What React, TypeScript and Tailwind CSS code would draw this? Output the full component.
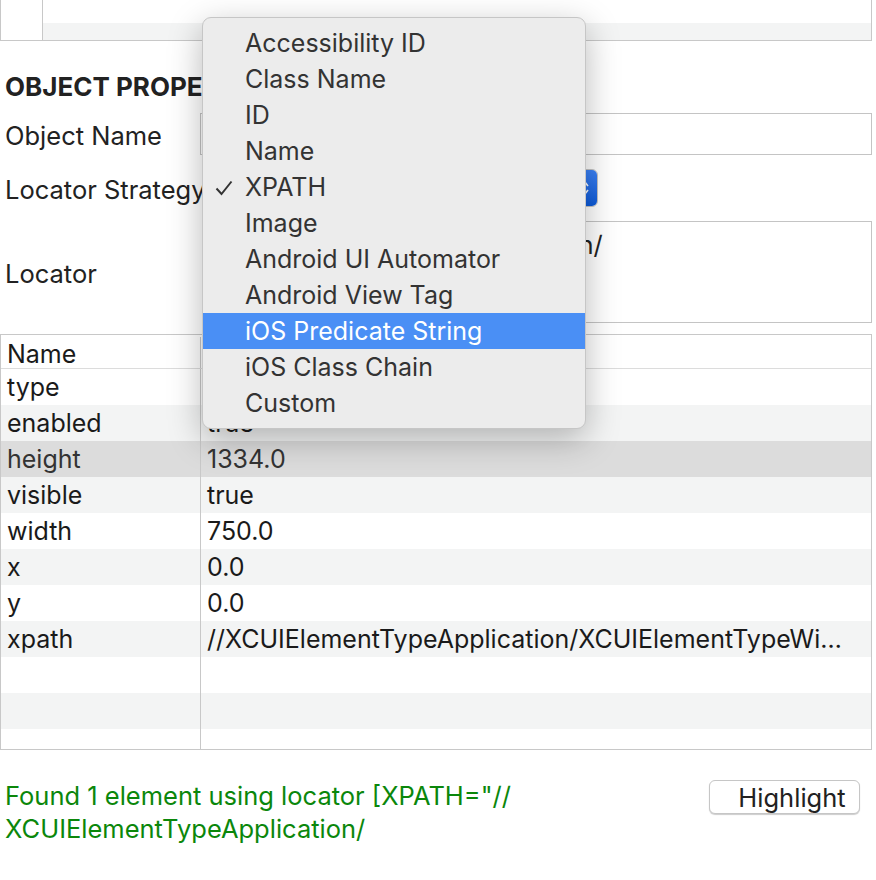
import React from "react";

const font = { fontFamily: 'Inter, "Liberation Sans", Arial, sans-serif' };

const strategies = [
  "Accessibility ID",
  "Class Name",
  "ID",
  "Name",
  "XPATH",
  "Image",
  "Android UI Automator",
  "Android View Tag",
  "iOS Predicate String",
  "iOS Class Chain",
  "Custom",
];

const props: [string, string][] = [
  ["type", "XCUIElementTypeApplication"],
  ["enabled", "true"],
  ["height", "1334.0"],
  ["visible", "true"],
  ["width", "750.0"],
  ["x", "0.0"],
  ["y", "0.0"],
  ["xpath", "//XCUIElementTypeApplication/XCUIElementTypeWindow[1]/XCUIElementTypeOther"],
  ["", ""],
  ["", ""],
  ["", ""],
];

const StrategyMenu = () => (
  <div className="absolute left-[202px] top-[17px] w-[384px] rounded-[9px] border border-[#c6c6c6] bg-[#ececec] py-[7px] shadow-[0_10px_34px_rgba(0,0,0,0.28)]">
    {strategies.map((s) => {
      const active = s === "iOS Predicate String";
      const checked = s === "XPATH";
      return (
        <div
          key={s}
          className={`relative flex h-[36px] items-center pl-[42px] pt-[2px] text-[25px] ${
            active ? "bg-[#4a8ff5] text-white" : "text-[#333333]"
          }`}
        >
          {checked && (
            <svg className="absolute left-[12px] top-[11px]" width="18" height="16" viewBox="0 0 18 16">
              <path d="M1.5 8.5 L6.5 14 L16.5 1.5" fill="none" stroke="#333" strokeWidth="2" />
            </svg>
          )}
          {s}
        </div>
      );
    })}
  </div>
);

const App = () => {
  return (
    <div className="relative h-[880px] w-[876px] bg-white text-[#222]" style={font}>
      {/* remnant of the tree table above */}
      <div className="flex h-[41px] w-[872px] border-x border-b border-[#c8c8c8]">
        <div className="w-[42px] border-r border-[#c8c8c8]" />
        <div className="flex flex-1 flex-col">
          <div className="h-[23px] bg-white" />
          <div className="flex-1 bg-[#f3f4f4]" />
        </div>
      </div>

      <div className="w-[872px] pl-[5px]">
        <h2 className="mt-[33px] h-[26px] whitespace-nowrap text-[26px] font-bold leading-[26px] text-[#222]">
          OBJECT PROPERTIES
        </h2>

        <div className="mt-[13px] grid grid-cols-[195px_1fr] items-center gap-y-[14px]">
          <div className="whitespace-nowrap pt-[3px] text-[25.5px] leading-[30px]">Object Name</div>
          <div className="h-[42px] border border-[#c4c4c4] bg-white" />

          <div className="whitespace-nowrap pt-[3px] text-[25.5px] leading-[30px]">Locator Strategy</div>
          <div className="ml-[10px] flex h-[38px] w-[388px] overflow-hidden rounded-[6px] border border-[#c4c4c4] bg-white">
            <div className="flex-1 pl-[14px] text-[25.5px] leading-[36px]">XPATH</div>
            <div className="flex w-[24px] items-center justify-center bg-gradient-to-b from-[#3b82f6] to-[#0b5ad9]">
              <svg width="10" height="20" viewBox="0 0 10 20">
                <path d="M2 8 L5 4 L8 8 M2 12 L5 16 L8 12" fill="none" stroke="white" strokeWidth="1.6" />
              </svg>
            </div>
          </div>

          <div className="pt-[3px] text-[25.5px] leading-[30px]">Locator</div>
          <div className="ml-[8px] h-[102px] whitespace-nowrap border border-[#c4c4c4] bg-white pl-[15px] pt-[8px] text-[25.5px] leading-[30px]">
            //XCUIElementTypeApplication/
          </div>
        </div>
      </div>

      {/* properties table */}
      <div className="mt-[11px] w-[872px] border border-[#c8c8c8] text-[25px] text-[#1a1a1a]">
        <div className="flex h-[34px] border-b border-[#dcdcdc] bg-white pt-[2px] leading-[34px]">
          <div className="w-[200px] border-r border-[#c8c8c8] pl-[6px]">Name</div>
          <div className="flex-1 pl-[6px]">Value</div>
        </div>
        {props.map(([k, v], i) => {
          const selected = k === "height";
          const bg = selected ? "bg-[#dcdcdc] text-[#333]" : i % 2 === 1 ? "bg-[#f3f4f4]" : "bg-white";
          return (
            <div key={i} className={`flex ${i === props.length - 1 ? "h-[20px]" : "h-[36px]"} leading-[36px] ${bg}`}>
              <div className="w-[200px] border-r border-[#c8c8c8] pl-[6px]">{k}</div>
              <div className="min-w-0 flex-1 truncate pl-[6px] pr-[16px]">{v}</div>
            </div>
          );
        })}
      </div>

      <div className="mt-[29px] flex w-[872px] items-start justify-between pl-[5px] pr-[12px]">
        <p className="w-[560px] text-[25.5px] leading-[33px] text-[#0b870b]">
          Found 1 element using locator [XPATH="//
          <br />
          XCUIElementTypeApplication/
        </p>
        <button className="mt-[1px] h-[34px] w-[151px] rounded-[6px] border border-[#c6c6c6] bg-white pl-[15px] pt-[2px] text-[25.5px] leading-[30px] text-[#222] shadow-[0_1px_1px_rgba(0,0,0,0.2)]">
          Highlight
        </button>
      </div>

      <StrategyMenu />
    </div>
  );
};

export default App;
